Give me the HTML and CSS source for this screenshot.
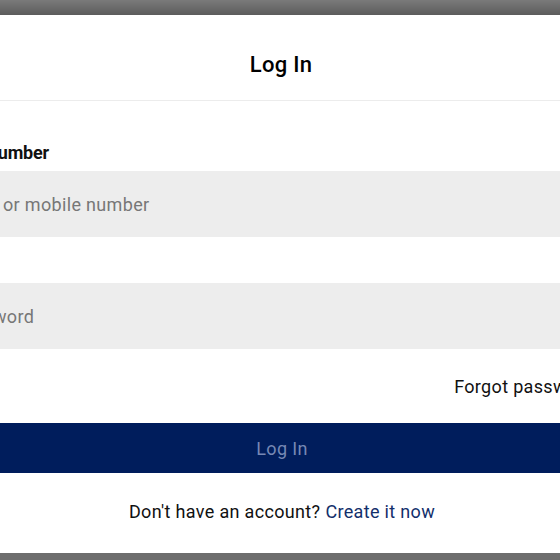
FILE: index.html
```html
<!DOCTYPE html>
<html>
<head>
<meta charset="utf-8">
<link rel="stylesheet" href="styles.css">
</head>
<body>
<div class="screen">
  <div class="topbar"></div>
  <div class="modal">
    <div class="modal-header">
      <h1 class="title">Log In</h1>
    </div>
    <div class="modal-body">
      <form class="form">
        <label class="label">Phone number</label>
        <input class="field" type="text" placeholder="Email or mobile number">
        <label class="label label-hidden">Password</label>
        <input class="field" type="password" placeholder="Password">
        <div class="forgot-row"><a class="forgot">Forgot password?</a></div>
        <button class="submit" type="button">Log In</button>
      </form>
      <p class="signup">Don't have an account? <a class="signup-link">Create it now</a></p>
    </div>
  </div>
  <div class="bottombar"></div>
</div>
</body>
</html>
```
FILE: styles.css
```css
html, body {
  margin: 0;
  padding: 0;
}
body {
  width: 560px;
  height: 560px;
  overflow: hidden;
  background: #6e6e6e;
  font-family: Roboto, "Liberation Sans", sans-serif;
  letter-spacing: 0.33px;
  color: #111;
}
.screen {
  width: 560px;
  height: 560px;
  overflow: hidden;
  display: flex;
  flex-direction: column;
}
.topbar {
  height: 15px;
  flex: none;
  background: linear-gradient(#7a7a7a, #5c5c5c);
}
.modal {
  flex: none;
  height: 538px;
  background: #fff;
  margin: 0 -100px;
  display: flex;
  flex-direction: column;
}
.modal-header {
  height: 71px;
  padding-top: 14px;
  border-bottom: 1px solid #ececec;
  display: flex;
  align-items: center;
  justify-content: center;
  padding-left: 2px;
}
.title {
  margin: 0;
  font-size: 22px;
  font-weight: 500;
  letter-spacing: 0.3px;
  color: #000;
}
.modal-body {
  padding: 0 34px 0 38px;
  display: flex;
  flex-direction: column;
}
.form {
  display: flex;
  flex-direction: column;
}
.label {
  font-size: 18px;
  font-weight: 700;
  letter-spacing: -0.2px;
  height: 20px;
  line-height: 20px;
  margin-top: 42px;
  margin-bottom: 8px;
  margin-left: -5px;
  color: #111;
}
.label-hidden {
  visibility: hidden;
  margin-top: 18px;
}
.field {
  height: 66px;
  box-sizing: border-box;
  border: none;
  background: #ededed;
  font-family: inherit;
  letter-spacing: inherit;
  font-size: 18px;
  padding: 0 0 0 14px;
  outline: none;
}
.field::placeholder {
  color: #777;
}
.forgot-row {
  display: flex;
  justify-content: flex-end;
  height: 74px;
  align-items: center;
}
.forgot {
  font-size: 18px;
  color: #111;
  margin-right: 23px;
}
.submit {
  height: 50px;
  border: none;
  background: #001d5c;
  color: #7688b4;
  font-family: inherit;
  letter-spacing: inherit;
  font-size: 18px;
}
.signup {
  margin: 0;
  height: 76px;
  display: flex;
  align-items: center;
  justify-content: center;
  font-size: 18px;
  color: #111;
}
.signup-link {
  margin-left: 5px;
  color: #132f6b;
}
.bottombar {
  flex: 1;
  background: #6e6e6e;
}
```
